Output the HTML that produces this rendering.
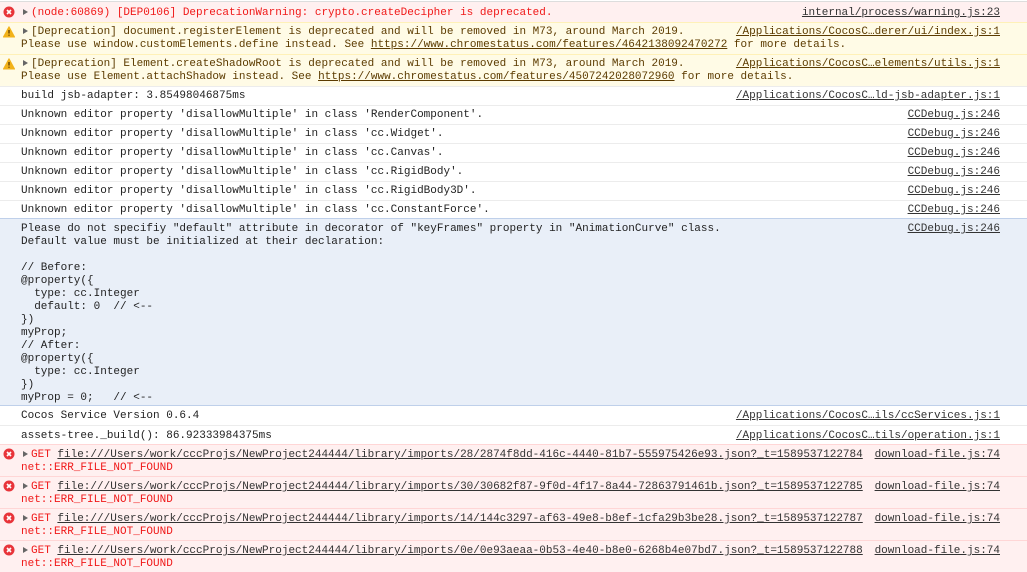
<!DOCTYPE html>
<html><head><meta charset="utf-8"><style>
*{margin:0;padding:0;box-sizing:border-box}
body{width:1027px;height:560px;overflow:hidden;background:#fff;font-family:"Liberation Mono",monospace;font-size:11px;color:#222;position:relative}
.r{position:absolute;left:0;width:1027px;border-top:1px solid #ececec}
.e{background:#fff0f0;border-top:1px solid #ffd6d6;color:#f01818}
.w{background:#fffbe6;border-top:1px solid #fff1b8;color:#5c3b00}
.b{background:#e9eff8;border-top:1px solid #bfd0ea;border-bottom:1px solid #bfd0ea}
.l{position:absolute;left:21px;white-space:pre;line-height:13px}
.s{position:absolute;right:27px;white-space:pre;line-height:13px;text-decoration:underline;color:#333}
.w .s{color:#5c3b00}
u{text-decoration:underline}
.e u{color:#333}
.t{display:inline-block;width:0;height:0;border-left:5px solid #666;border-top:3.5px solid transparent;border-bottom:3.5px solid transparent;margin:0 3px 0 2px;vertical-align:0}
.ic{position:absolute;left:3px;width:12px;height:12px}
</style></head><body>
<svg width="0" height="0" style="position:absolute"><defs>
<g id="x"><circle cx="6" cy="6" r="5.5" fill="#e8343a"/><path d="M4 4L8 8M8 4L4 8" stroke="#fff" stroke-width="1.6"/></g>
<g id="wa"><path d="M6 0.8L11.6 11H0.4Z" fill="#f2b21a" stroke="#f2b21a" stroke-linejoin="round"/><path d="M6 4V7.5M6 8.6V9.8" stroke="#5c3b00" stroke-width="1.3"/></g>
</defs></svg>

<div class="r e" style="top:1px;height:21px;border-top:1px solid #ddd">
<svg class="ic" style="top:4px" viewBox="0 0 12 12"><use href="#x"/></svg>
<div class="l" style="top:5px"><span class="t"></span>(node:60869) [DEP0106] DeprecationWarning: crypto.createDecipher is deprecated.</div>
<div class="s" style="top:5px">internal/process/warning.js:23</div></div>

<div class="r w" style="top:22px;height:32px">
<svg class="ic" style="top:3px" viewBox="0 0 12 12"><use href="#wa"/></svg>
<div class="l" style="top:3px"><span class="t"></span>[Deprecation] document.registerElement is deprecated and will be removed in M73, around March 2019.
Please use window.customElements.define instead. See <u>https://www.chromestatus.com/features/4642138092470272</u> for more details.</div>
<div class="s" style="top:3px">/Applications/CocosC…derer/ui/index.js:1</div></div>

<div class="r w" style="top:54px;height:32px">
<svg class="ic" style="top:3px" viewBox="0 0 12 12"><use href="#wa"/></svg>
<div class="l" style="top:3px"><span class="t"></span>[Deprecation] Element.createShadowRoot is deprecated and will be removed in M73, around March 2019.
Please use Element.attachShadow instead. See <u>https://www.chromestatus.com/features/4507242028072960</u> for more details.</div>
<div class="s" style="top:3px">/Applications/CocosC…elements/utils.js:1</div></div>

<div class="r" style="top:86px;height:19px"><div class="l" style="top:3px">build jsb-adapter: 3.85498046875ms</div><div class="s" style="top:3px">/Applications/CocosC…ld-jsb-adapter.js:1</div></div>
<div class="r" style="top:105px;height:19px"><div class="l" style="top:3px">Unknown editor property 'disallowMultiple' in class 'RenderComponent'.</div><div class="s" style="top:3px">CCDebug.js:246</div></div>
<div class="r" style="top:124px;height:19px"><div class="l" style="top:3px">Unknown editor property 'disallowMultiple' in class 'cc.Widget'.</div><div class="s" style="top:3px">CCDebug.js:246</div></div>
<div class="r" style="top:143px;height:19px"><div class="l" style="top:3px">Unknown editor property 'disallowMultiple' in class 'cc.Canvas'.</div><div class="s" style="top:3px">CCDebug.js:246</div></div>
<div class="r" style="top:162px;height:19px"><div class="l" style="top:3px">Unknown editor property 'disallowMultiple' in class 'cc.RigidBody'.</div><div class="s" style="top:3px">CCDebug.js:246</div></div>
<div class="r" style="top:181px;height:19px"><div class="l" style="top:3px">Unknown editor property 'disallowMultiple' in class 'cc.RigidBody3D'.</div><div class="s" style="top:3px">CCDebug.js:246</div></div>
<div class="r" style="top:200px;height:19px"><div class="l" style="top:3px">Unknown editor property 'disallowMultiple' in class 'cc.ConstantForce'.</div><div class="s" style="top:3px">CCDebug.js:246</div></div>

<div class="r b" style="top:218px;height:188px"><div class="l" style="top:4px">Please do not specifiy "default" attribute in decorator of "keyFrames" property in "AnimationCurve" class.
Default value must be initialized at their declaration:

// Before:
@property({
  type: cc.Integer
  default: 0  // &lt;--
})
myProp;
// After:
@property({
  type: cc.Integer
})
myProp = 0;   // &lt;--</div><div class="s" style="top:4px">CCDebug.js:246</div></div>

<div class="r" style="top:406px;height:19px;border-top:none"><div class="l" style="top:4px">Cocos Service Version 0.6.4</div><div class="s" style="top:4px">/Applications/CocosC…ils/ccServices.js:1</div></div>
<div class="r" style="top:425px;height:19px"><div class="l" style="top:4px">assets-tree._build(): 86.92333984375ms</div><div class="s" style="top:4px">/Applications/CocosC…tils/operation.js:1</div></div>

<div class="r e" style="top:444px;height:32px">
<svg class="ic" style="top:3px" viewBox="0 0 12 12"><use href="#x"/></svg>
<div class="l" style="top:4px"><span class="t"></span>GET <u>file:///Users/work/cccProjs/NewProject244444/library/imports/28/2874f8dd-416c-4440-81b7-555975426e93.json?_t=1589537122784</u>
net::ERR_FILE_NOT_FOUND</div><div class="s" style="top:4px">download-file.js:74</div></div>
<div class="r e" style="top:476px;height:32px">
<svg class="ic" style="top:3px" viewBox="0 0 12 12"><use href="#x"/></svg>
<div class="l" style="top:4px"><span class="t"></span>GET <u>file:///Users/work/cccProjs/NewProject244444/library/imports/30/30682f87-9f0d-4f17-8a44-72863791461b.json?_t=1589537122785</u>
net::ERR_FILE_NOT_FOUND</div><div class="s" style="top:4px">download-file.js:74</div></div>
<div class="r e" style="top:508px;height:32px">
<svg class="ic" style="top:3px" viewBox="0 0 12 12"><use href="#x"/></svg>
<div class="l" style="top:4px"><span class="t"></span>GET <u>file:///Users/work/cccProjs/NewProject244444/library/imports/14/144c3297-af63-49e8-b8ef-1cfa29b3be28.json?_t=1589537122787</u>
net::ERR_FILE_NOT_FOUND</div><div class="s" style="top:4px">download-file.js:74</div></div>
<div class="r e" style="top:540px;height:32px">
<svg class="ic" style="top:3px" viewBox="0 0 12 12"><use href="#x"/></svg>
<div class="l" style="top:4px"><span class="t"></span>GET <u>file:///Users/work/cccProjs/NewProject244444/library/imports/0e/0e93aeaa-0b53-4e40-b8e0-6268b4e07bd7.json?_t=1589537122788</u>
net::ERR_FILE_NOT_FOUND</div><div class="s" style="top:4px">download-file.js:74</div></div>
</body></html>
